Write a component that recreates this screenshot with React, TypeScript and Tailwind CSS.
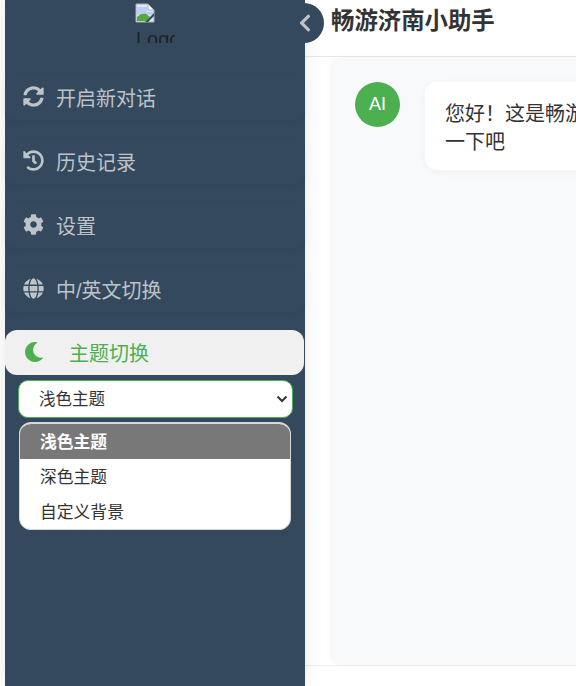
import { FaChevronLeft, FaCog, FaGlobe, FaHistory, FaMoon, FaSyncAlt } from "react-icons/fa";

const FONT = "font-['Liberation_Sans','Noto_Sans_CJK_SC',sans-serif]";

const menu = [
  { label: "开启新对话", Icon: FaSyncAlt },
  { label: "历史记录", Icon: FaHistory },
  { label: "设置", Icon: FaCog },
  { label: "中/英文切换", Icon: FaGlobe },
];

const themes = ["浅色主题", "深色主题", "自定义背景"];

// Chrome's broken image glyph
const BrokenImage = () => (
  <svg width="20" height="20" viewBox="0 0 20 20" className="block">
    <path d="M1 1h12l6 6v12H1z" fill="#dfe7f5" stroke="#a8acb3" strokeWidth="1" />
    <path d="M13 1v6h6z" fill="#fff" stroke="#a8acb3" strokeWidth="1" />
    <path d="M2 4h10v5h6v3H2z" fill="#b6d0f6" />
    <path d="M2 18v-4c3-3 6-4 9-3l4 3-4 4z" fill="#5aa63a" />
    <path d="M10 19l9-9v3l-6 6z" fill="#34495e" />
  </svg>
);

const App = () => {
  return (
    <div className={`${FONT} flex h-[686px] w-[576px] overflow-hidden bg-white pl-[5px]`}>
      <aside className="relative z-10 flex w-[300px] shrink-0 flex-col bg-[#34495e] shadow-[0_0_18px_rgba(0,0,0,0.09)]">
        <div className="flex h-[75px] justify-center pt-[3px]">
          <div className="h-10 w-10 overflow-hidden text-[20px] leading-[24px] text-[#222]">
            <BrokenImage />
            <div className="pl-px pt-[4px]">Logo</div>
          </div>
        </div>

        <nav className="flex w-[299px] flex-col gap-[19px]">
          {menu.map(({ label, Icon }) => (
            <div
              key={label}
              className="flex h-[45px] items-center rounded-xl pl-[18px] pt-[2px] text-[20px] text-[#bdc3c7] shadow-[0_2px_6px_rgba(0,0,0,0.06)]"
            >
              <Icon className="mr-[12px] h-[21px] w-[21px] -translate-y-[2px]" />
              <span>{label}</span>
            </div>
          ))}
          <div className="-mt-px flex h-[45px] items-center rounded-xl bg-[#f0f0f0] pl-[19px] pt-[2px] text-[20px] text-[#4caf50]">
            <FaMoon className="mr-[25px] h-[20px] w-[20px] -translate-y-[2px]" />
            <span>主题切换</span>
          </div>
        </nav>

        <div className="mt-[5px] pl-[13px] pr-[12px]">
          <div className="relative">
            <select className="h-[38px] w-full appearance-none rounded-[10px] border border-[#4caf50] bg-white pl-5 text-[16.5px] text-[#333]">
              <option>浅色主题</option>
              <option>深色主题</option>
              <option>自定义背景</option>
            </select>
            <svg
              width="12"
              height="8"
              viewBox="0 0 12 8"
              className="pointer-events-none absolute right-[5px] top-[15px]"
            >
              <path d="M1.5 1.5L6 6l4.5-4.5" fill="none" stroke="#333" strokeWidth="2" />
            </svg>
          </div>
          <ul className="ml-px mt-[4px] w-[272px] overflow-hidden rounded-xl border border-t-2 border-[#d8d8d8] bg-white text-[16.8px] text-[#333]">
            {themes.map((theme, i) => (
              <li
                key={theme}
                className={`flex h-[35px] items-center pl-[20px] pt-[3px] ${i === 0 ? "bg-[#787878] font-bold text-white" : ""}`}
              >
                {theme}
              </li>
            ))}
          </ul>
        </div>

        <button className="absolute left-[279px] top-[3px] flex h-10 w-10 items-center justify-center rounded-full bg-[#34495e] text-[#bdc3c7]">
          <FaChevronLeft className="ml-px h-[20px] w-[20px]" />
        </button>
      </aside>

      <main className="flex min-w-0 flex-1 flex-col">
        <header className="flex h-[57px] shrink-0 items-center border-b border-[#e8e8e8] bg-white pb-[13px] pl-[26px]">
          <h1 className="text-[23.4px] font-bold text-[#333]">畅游济南小助手</h1>
        </header>
        <div className="flex min-h-0 flex-1 border-b border-[#eeeeee] bg-white pl-[25px]">
          <section className="flex flex-1 gap-[25px] rounded-xl bg-[#f8f9fb] pl-[25px] pt-[25px] shadow-[0_0_6px_rgba(0,0,0,0.03)]">
            <div className="flex h-[45px] w-[45px] shrink-0 items-center justify-center rounded-full bg-[#4caf50] text-[18px] text-white">
              AI
            </div>
            <div className="h-[88px] w-[420px] shrink-0 rounded-xl bg-white py-[18px] pl-[20px] pr-[21px] text-[20px] leading-[28px] text-[#333] shadow-[0_2px_8px_rgba(0,0,0,0.04)]">
              您好！这是畅游济南小助手，快来体验
              <br />
              一下吧
            </div>
          </section>
        </div>
        <div className="h-5 shrink-0 bg-white" />
      </main>
    </div>
  );
};

export default App;
